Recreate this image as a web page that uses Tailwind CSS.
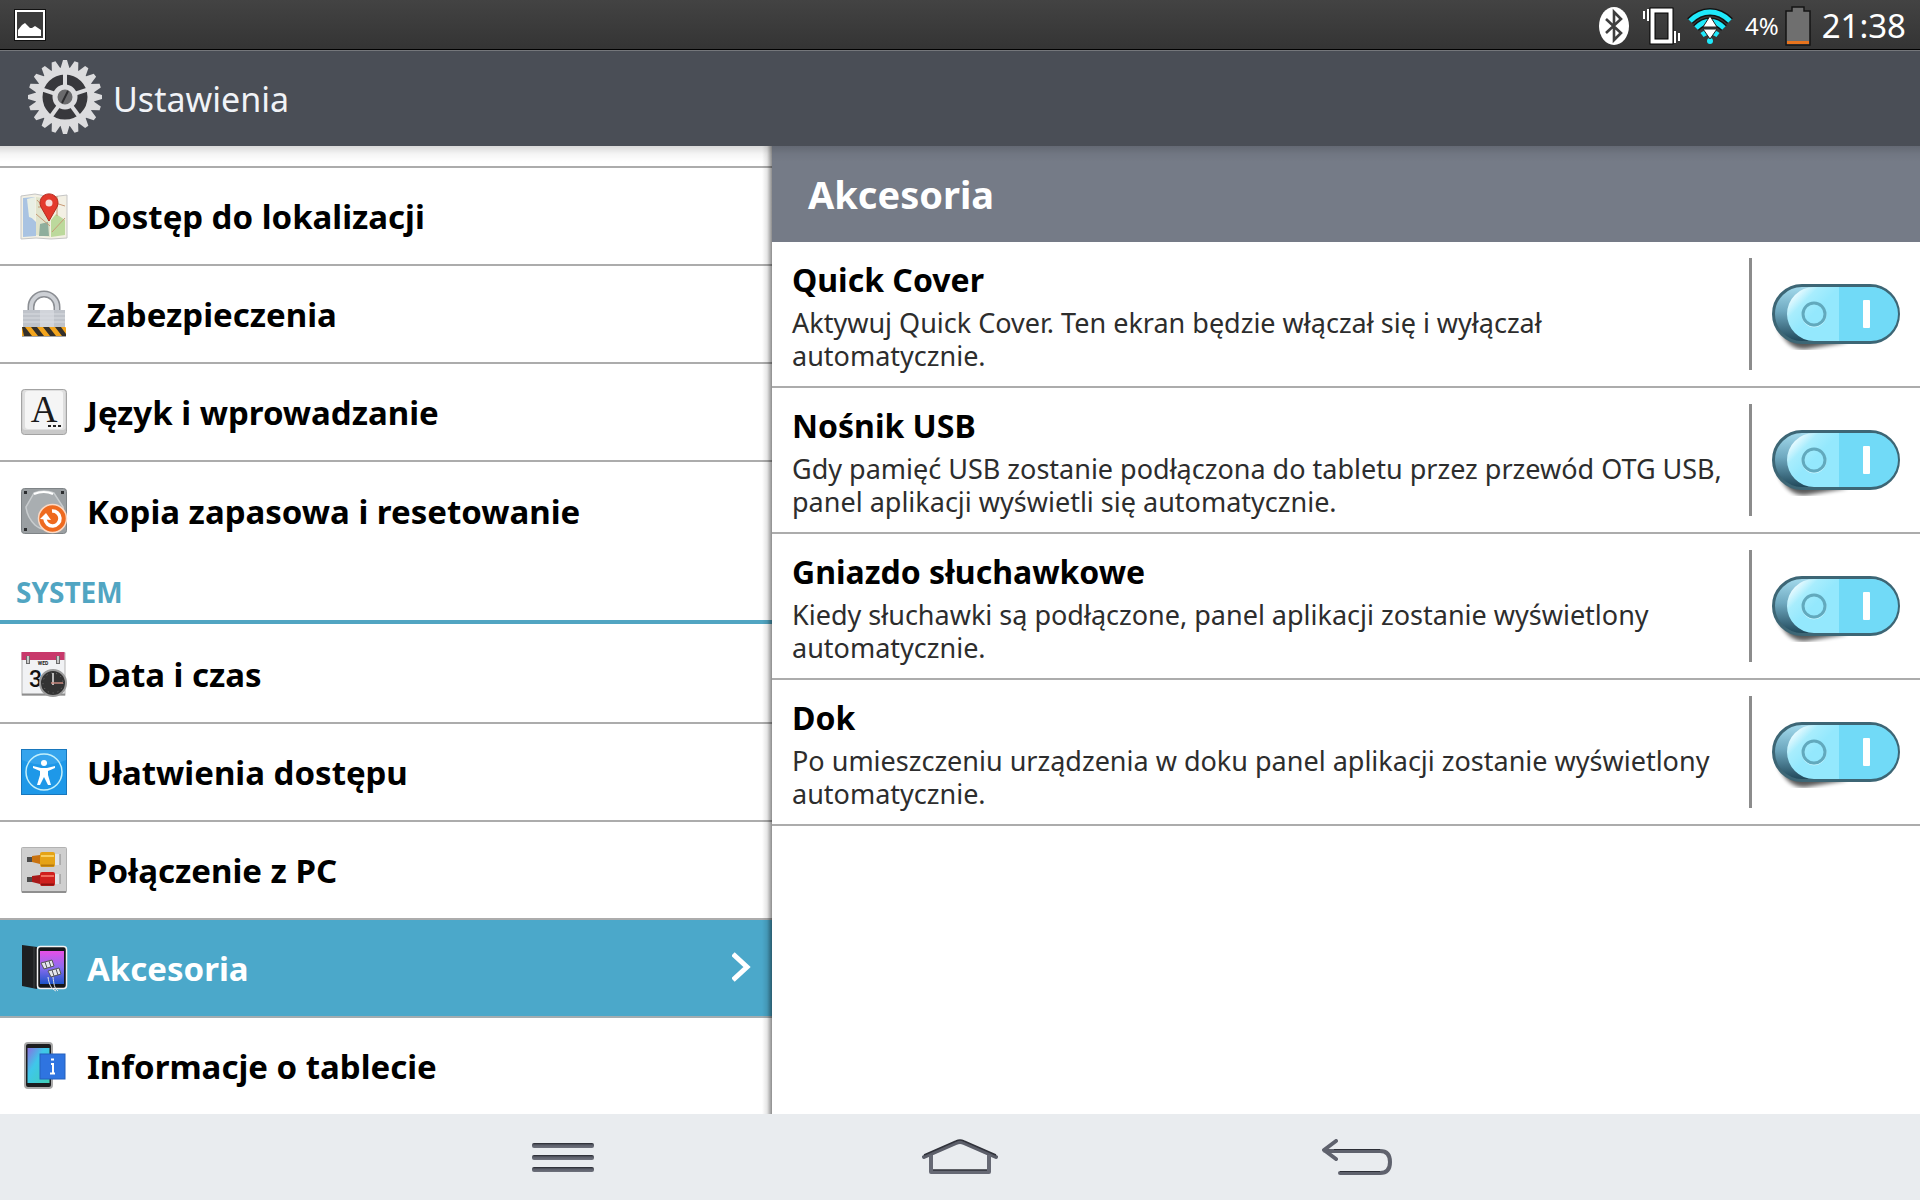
<!DOCTYPE html>
<html lang="pl">
<head>
<meta charset="utf-8">
<meta name="viewport" content="width=device-width, initial-scale=1">
<title>Ustawienia</title>
<script src="https://cdn.jsdelivr.net/npm/@tailwindcss/browser@4"></script>
</head>
<body class="flex min-h-screen flex-col bg-white font-['Noto_Sans',sans-serif] text-black">

<!-- Shared gradients and the switch artwork -->
<svg class="absolute size-0" aria-hidden="true">
  <defs>
    <linearGradient id="well" x1="0" y1="0" x2="0" y2="1"><stop offset="0" stop-color="#a5dcee"/><stop offset=".45" stop-color="#6fa9c0"/><stop offset="1" stop-color="#1d4456"/></linearGradient>
    <linearGradient id="rocker" x1="0" y1="0" x2=".5" y2=".5"><stop offset="0" stop-color="#fff"/><stop offset=".25" stop-color="#f0fcff"/><stop offset=".6" stop-color="#a8edfd"/><stop offset="1" stop-color="#94e8fd"/></linearGradient>
    <linearGradient id="ink" x1="0" y1="0" x2="0" y2="1"><stop offset="0" stop-color="#23252c"/><stop offset=".4" stop-color="#5b5e69"/><stop offset="1" stop-color="#6f727d"/></linearGradient>
    <filter id="soft" x="-20%" y="-50%" width="140%" height="200%"><feGaussianBlur stdDeviation="2"/></filter>
    <symbol id="switch" viewBox="0 0 128 72">
      <path d="M6 50C12 60 18 72 34 71C48 69 62 66 76 64Z" fill="#000" opacity=".65" filter="url(#soft)"/>
      <rect x="1.500" y="7.500" width="125" height="57" rx="28.500" fill="url(#well)" stroke="#3d6675" stroke-width="3"/>
      <path d="M68 9H42a27 27 0 0 0 0 54H68Z" fill="url(#rocker)"/>
      <path d="M67 9H99a27 27 0 0 1 0 54H67Z" fill="#71daf7"/>
      <circle cx="42" cy="37" r="12" fill="none" stroke="#d6f8ff" opacity=".8"/>
      <circle cx="42" cy="36" r="11" fill="none" stroke="#62a9bd" stroke-width="3"/>
      <rect x="91" y="22" width="7" height="28" rx="1" fill="#fff"/>
    </symbol>
  </defs>
</svg>

<!-- Status bar -->
<div class="flex h-[51px] items-center border-b border-[#75777b] bg-linear-to-b from-[#434343] to-[#343434] pr-[14px] pl-[14px] text-white shadow-[inset_0_-1px_0_#000]">
  <svg class="h-8 w-8" viewBox="0 0 32 32" role="img" aria-label="Obraz"><rect x=".5" y=".5" width="31" height="31" fill="#3c3c3c" stroke="#111"/><rect x="2" y="2" width="28" height="28" fill="none" stroke="#fff" stroke-width="2"/><path d="M4 27V21L8 16L11 14L16 19H18L21 17L27 21V27Z" fill="#fff"/></svg>
  <div class="ml-auto flex items-center pt-px">
    <svg class="h-[38px] w-[30px]" viewBox="0 0 30 38" role="img" aria-label="Bluetooth"><ellipse cx="15" cy="19" rx="15" ry="19" fill="#fff"/><path d="M7 12L22 26L15 33V5L22 12L7 26" fill="none" stroke="#3e3e3e" stroke-width="2.600"/></svg>
    <svg class="ml-[13px] h-[38px] w-[38px]" viewBox="0 0 38 38" role="img" aria-label="Wibracje"><rect x="10.500" y="3.500" width="18" height="31" fill="none" stroke="#000" stroke-width="6"/><rect x="10.500" y="3.500" width="18" height="31" fill="none" stroke="#fff" stroke-width="4"/><path d="M2 4V12M6 2V14M33 24V36M37 26V34" stroke="#fff" stroke-width="2"/></svg>
    <svg class="ml-[7px] h-[38px] w-[46px]" viewBox="0 0 46 38" role="img" aria-label="Wi-Fi"><g fill="none" stroke="#111" stroke-width="8"><path d="M3 14C15 2 31 2 43 14M9 21C18 12 28 12 37 21"/></g><g fill="none" stroke="#1fe9fb" stroke-width="5"><path d="M3 14C15 2 31 2 43 14M9 21C18 12 28 12 37 21M15 28C20 24 26 24 31 28"/></g><circle cx="23" cy="34" r="3" fill="#1fe9fb"/><path d="M23 9L30 20H16ZM23 32L16 22H30Z" fill="#fff" stroke="#222"/></svg>
    <span class="ml-3 text-2xl">4%</span>
    <svg class="ml-[6px] h-10 w-[26px]" viewBox="0 0 26 40" role="img" aria-label="Bateria"><path d="M1 5H7V1H19V5H25V39H1Z" fill="#6f6f6f" stroke="#151515" stroke-width="1.500"/><rect x="2" y="35" width="22" height="3" fill="#e8741e"/></svg>
    <time class="ml-[11px] text-[33px] leading-10">21:38</time>
  </div>
</div>

<!-- Application bar -->
<header class="flex h-[95px] items-center bg-[#4a4e56] pl-[25px] text-[#f1f3f7]">
  <svg class="-mt-1 h-20 w-20" viewBox="-40 -40 80 80" aria-hidden="true">
    <circle r="25" fill="#38383c"/>
    <g fill="#dcdcde">
      <path d="M-5 -27L-2 -37H2L5 -27ZM-5 27L-2 37H2L5 27Z"/>
      <path transform="rotate(18)" d="M-5 -27L-2 -37H2L5 -27ZM-5 27L-2 37H2L5 27Z"/>
      <path transform="rotate(36)" d="M-5 -27L-2 -37H2L5 -27ZM-5 27L-2 37H2L5 27Z"/>
      <path transform="rotate(54)" d="M-5 -27L-2 -37H2L5 -27ZM-5 27L-2 37H2L5 27Z"/>
      <path transform="rotate(72)" d="M-5 -27L-2 -37H2L5 -27ZM-5 27L-2 37H2L5 27Z"/>
      <path transform="rotate(90)" d="M-5 -27L-2 -37H2L5 -27ZM-5 27L-2 37H2L5 27Z"/>
      <path transform="rotate(108)" d="M-5 -27L-2 -37H2L5 -27ZM-5 27L-2 37H2L5 27Z"/>
      <path transform="rotate(126)" d="M-5 -27L-2 -37H2L5 -27ZM-5 27L-2 37H2L5 27Z"/>
      <path transform="rotate(144)" d="M-5 -27L-2 -37H2L5 -27ZM-5 27L-2 37H2L5 27Z"/>
      <path transform="rotate(162)" d="M-5 -27L-2 -37H2L5 -27ZM-5 27L-2 37H2L5 27Z"/>
    </g>
    <circle r="26" fill="none" stroke="#dcdcde" stroke-width="7"/>
    <g stroke="#dcdcde" stroke-width="4"><path d="M0 -10V-26"/><path d="M0 -10V-26" transform="rotate(72)"/><path d="M0 -10V-26" transform="rotate(144)"/><path d="M0 -10V-26" transform="rotate(216)"/><path d="M0 -10V-26" transform="rotate(288)"/></g>
    <circle r="10" fill="#6a6a6c" stroke="#dcdcde" stroke-width="5"/>
    <path d="M-3 6L3 -6" stroke="#2d2d2f" stroke-width="2"/>
  </svg>
  <h1 class="ml-2 text-[34px] leading-none font-normal">Ustawienia</h1>
</header>

<main class="relative grid flex-1 grid-cols-[193fr_287fr]">
  <!-- Category list -->
  <nav class="relative text-[33px] leading-10 font-bold" aria-label="Kategorie">
    <div class="h-[22px] border-b-2 border-[#acacac]"></div>

    <a href="#lokalizacja" class="flex h-[98px] items-center gap-[19px] border-b-2 border-[#acacac] px-5">
      <svg class="size-12" viewBox="0 0 48 48" aria-hidden="true">
        <path d="M1 4L15 2L31 5L47 3V46L31 47L16 46L1 47Z" fill="#f3f0e4" stroke="#c5c5c5"/>
        <path d="M3 6L15 5V20L10 24L16 30V44L3 45Z" fill="#a9c3e2"/><path d="M7 7L15 5V27L9 25Z" fill="#e9efe4"/>
        <path d="M16 5L30 7V45L16 43Z" fill="#e0e3cb"/><path d="M31 28L36 22L45 28V43L31 45Z" fill="#bcd99c"/>
        <path d="M20 32L28 30L29 44H19Z" fill="#8fae9c"/>
        <path d="M17 8L28 20M16 22L30 34M32 40L45 26M32 10L45 14M37 4V24M18 15H29" stroke="#c79a77" fill="none"/>
        <path d="M29 29L21 15A9 9 0 1 1 37 15Z" fill="#e33a2d" stroke="#b5281c"/><circle cx="29" cy="11" r="3.500" fill="#f7dcd8"/>
      </svg>
      <span class="pt-px">Dostęp do lokalizacji</span>
    </a>

    <a href="#zabezpieczenia" class="flex h-[98px] items-center gap-[19px] border-b-2 border-[#acacac] px-5">
      <svg class="size-12" viewBox="0 0 48 48" aria-hidden="true">
        <path d="M11 24V17A13 13 0 0 1 37 17V24" fill="none" stroke="#8b8e93" stroke-width="7"/><path d="M11 24V17A13 13 0 0 1 37 17V24" fill="none" stroke="#cdd0d5" stroke-width="4"/>
        <rect x="3" y="20" width="42" height="18" fill="#bfc3ca"/><path d="M3 24H45M3 28H45M3 32H45" stroke="#d8dbe0"/><rect x="20" y="20" width="14" height="18" fill="#d8dbe1" opacity=".7"/>
        <rect x="2" y="37" width="44" height="10" rx="1" fill="#f3a51d"/><path d="M2 37H5L12 46H4ZM11 37H17L24 46H18ZM23 37H29L36 46H30ZM35 37H41L46 44V46H42Z" fill="#34302a"/><path d="M2 46.500H46" stroke="#a5a5a5"/>
      </svg>
      <span class="pt-px">Zabezpieczenia</span>
    </a>

    <a href="#jezyk" class="flex h-[98px] items-center gap-[19px] border-b-2 border-[#acacac] px-5">
      <svg class="size-12" viewBox="0 0 48 48" aria-hidden="true">
        <rect x="1.500" y="1.500" width="45" height="45" rx="3" fill="#c9c9c9" stroke="#a3a3a3"/><rect x="2.500" y="2" width="43" height="40" rx="3" fill="#dedede"/><rect x="5" y="3" width="38" height="38" rx="3" fill="#f5f5f5"/>
        <text x="24" y="34" text-anchor="middle" font-family="Liberation Serif, serif" font-weight="400" font-size="37" fill="#1b1b1b">A</text>
        <path d="M28 38H31M33 38H36M38 38H41" stroke="#222" stroke-width="2"/>
      </svg>
      <span class="pt-px">Język i wprowadzanie</span>
    </a>

    <a href="#kopia" class="flex h-[98px] items-center gap-[19px] px-5">
      <svg class="size-12" viewBox="0 0 48 48" aria-hidden="true">
        <rect x="1.500" y="1.500" width="45" height="45" rx="3" fill="#9a9fa2" stroke="#7f8487"/>
        <path d="M14 6Q24 2 34 6L43 20Q44 30 34 38Q24 46 15 38Q7 30 6 20Z" fill="#a9aeb1" stroke="#c9cdcf" stroke-width="1.500"/><path d="M14 7Q24 3 33 7" stroke="#fff" stroke-width="2" fill="none"/>
        <g fill="#2c2e30"><rect x="4" y="4" width="3" height="3"/><rect x="41" y="4" width="3" height="3"/><rect x="4" y="41" width="3" height="3"/></g>
        <circle cx="32.500" cy="31.500" r="14" fill="#ee6a1f" stroke="#fbd9c4" stroke-width="1.500"/>
        <path d="M32 24A7.500 7.500 0 1 1 25 32" fill="none" stroke="#fff" stroke-width="3.500"/><path d="M20 32L26 26L31 33Z" fill="#fff"/>
      </svg>
      <span class="pt-px">Kopia zapasowa i resetowanie</span>
    </a>

    <h2 class="mb-[2px] flex h-16 items-center border-b-4 border-[#51a5c2] pt-1 pl-4 text-[28px] leading-8 text-[#51a5c2]">SYSTEM</h2>

    <a href="#data" class="flex h-[98px] items-center gap-[19px] border-b-2 border-[#acacac] px-5">
      <svg class="size-12" viewBox="0 0 48 48" aria-hidden="true">
        <rect x="2" y="3" width="43" height="42" fill="#f1f2f4" stroke="#b5b5b5"/><path d="M2 44.500H45" stroke="#8e8e8e" stroke-width="2"/><rect x="1.500" y="2" width="43" height="8" fill="#c8396b"/>
        <path d="M8 6V14M38 6V14" stroke="#6b6b6b" stroke-width="4"/><path d="M8 6V13M38 6V13" stroke="#c9c9c9" stroke-width="2"/>
        <text x="23" y="15" text-anchor="middle" font-family="Roboto, sans-serif" font-weight="700" font-size="5" fill="#222">WED</text>
        <text x="9" y="37" font-family="Roboto, sans-serif" font-weight="500" font-size="23" fill="#111">3</text>
        <circle cx="33" cy="33" r="13" fill="#333" stroke="#9b9b9b" stroke-width="2"/><circle cx="33" cy="33" r="10" fill="none" stroke="#777" stroke-dasharray="1 4"/>
        <path d="M33 23V35" stroke="#e8e8e8" stroke-width="1.500"/><path d="M31 33H43" stroke="#c98a80" stroke-width="1.500"/>
      </svg>
      <span class="pt-px">Data i czas</span>
    </a>

    <a href="#ulatwienia" class="flex h-[98px] items-center gap-[19px] border-b-2 border-[#acacac] px-5">
      <svg class="size-12" viewBox="0 0 48 48" aria-hidden="true">
        <rect x="1.500" y="1.500" width="45" height="45" fill="#1e98e8" stroke="#1877bd"/><path d="M2 2H46V12Q24 22 2 12Z" fill="#4bb0f2" opacity=".5"/>
        <circle cx="24" cy="24" r="18" fill="none" stroke="#c3f0fb" stroke-width="1.500"/>
        <circle cx="24" cy="15" r="3" fill="#fff"/><path d="M13 18L21 20H27L35 18V20L28 23V27L31 37H28L24 29L20 37H17L20 27V23L13 20Z" fill="#fff"/>
      </svg>
      <span class="pt-px">Ułatwienia dostępu</span>
    </a>

    <a href="#pc" class="flex h-[98px] items-center gap-[19px] border-b-2 border-[#acacac] px-5">
      <svg class="size-12" viewBox="0 0 48 48" aria-hidden="true">
        <rect x="1.500" y="1.500" width="45" height="45" rx="1" fill="#cfcfcf" stroke="#b2b2b2"/><path d="M2 46H46" stroke="#8f8f8f" stroke-width="2"/>
        <rect x="7" y="11" width="6" height="5" fill="#4b4b4b"/><path d="M12 10L20 9V18L12 16Z" fill="#c9720f"/><rect x="20" y="6" width="15" height="15" rx="2" fill="#e5a316"/><path d="M21 10H34" stroke="#f8d060" stroke-width="2"/><path d="M21 19.500H34" stroke="#b97a0c" stroke-width="2"/><rect x="35" y="8" width="5" height="11" fill="#e2e5e8"/><path d="M40 8V19" stroke="#888"/>
        <rect x="7" y="31" width="6" height="5" fill="#4b4b4b"/><path d="M12 30L20 29V38L12 36Z" fill="#a81818"/><rect x="20" y="26" width="15" height="14" rx="2" fill="#cf201e"/><path d="M21 30H34" stroke="#ef6a5c" stroke-width="2"/><path d="M21 38.500H34" stroke="#8e1210" stroke-width="2"/><rect x="35" y="28" width="5" height="10" fill="#e2e5e8"/><path d="M40 28V38" stroke="#888"/>
      </svg>
      <span class="pt-px">Połączenie z PC</span>
    </a>

    <a href="#akcesoria" aria-current="page" class="flex h-[98px] items-center gap-[19px] border-b-2 border-[#a3adb1] bg-[#4ba8ca] px-5 text-white">
      <svg class="size-12" viewBox="0 0 48 48" aria-hidden="true">
        <defs><linearGradient id="screen" x1="0" y1="0" x2="0" y2="1"><stop offset="0" stop-color="#e84fe6"/><stop offset=".5" stop-color="#8a6cf0"/><stop offset="1" stop-color="#1e54c8"/></linearGradient></defs>
        <path d="M2 1L17 3V45L2 42Z" fill="#1d1f21"/><path d="M14 3V44" stroke="#3d4043"/>
        <rect x="17.500" y="2.500" width="29" height="42" rx="3" fill="#15161a" stroke="#f2f2f2" stroke-width="1.500"/><rect x="20" y="7" width="24" height="33" fill="url(#screen)"/>
        <path d="M21 19L32 16L34 22L24 25ZM28 27L39 24L41 30L31 33Z" fill="#e5e5ec" stroke="#555"/><path d="M25 18L27 24M29 17L31 23M32 26L34 32M36 25L38 31" stroke="#55555f"/>
        <path d="M28 33C29 40 31 45 36 47M33 33C34 40 34 44 38 47" stroke="#dfe3ea" fill="none"/>
      </svg>
      <span class="pt-px">Akcesoria</span>
      <svg class="ml-auto h-8 w-5" viewBox="0 0 20 32" aria-hidden="true"><path d="M1 2L15 15L1 28" fill="none" stroke="#fff" stroke-width="5"/></svg>
    </a>

    <a href="#informacje" class="flex h-24 items-center gap-[19px] px-5">
      <svg class="size-12" viewBox="0 0 48 48" aria-hidden="true">
        <defs><linearGradient id="info" x1="0" y1="0" x2="1" y2="1"><stop offset="0" stop-color="#8a6fe0"/><stop offset=".4" stop-color="#3fc7ea"/><stop offset="1" stop-color="#3fd0b5"/></linearGradient></defs>
        <rect x="5" y="1" width="27" height="45" rx="3" fill="#1c1d1f" stroke="#a9a9a9" stroke-width="2"/><rect x="7.500" y="6" width="22" height="35" fill="url(#info)"/>
        <rect x="20" y="12" width="25" height="25" fill="#2f74e0" stroke="#2560bd"/>
        <path d="M31 17.500H34M31 22H33V31M30 31.500H35" fill="none" stroke="#fff" stroke-width="2"/>
      </svg>
      <span class="pt-px">Informacje o tablecie</span>
    </a>

    <!-- Shade cast by the detail pane on the list -->
    <div class="pointer-events-none absolute inset-y-0 right-0 w-[10px] bg-linear-to-r from-black/0 via-black/10 to-black/45"></div>
  </nav>

  <!-- Detail pane -->
  <section aria-labelledby="pane-title" class="bg-white">
    <h2 id="pane-title" class="flex h-24 items-center bg-[#757b87] pl-9 text-[38px] leading-none font-bold text-white">Akcesoria</h2>

    <div class="flex h-[146px] items-center border-b-2 border-[#acacac] px-5">
      <div class="flex-1 pt-[2px] pr-4">
        <label for="cover" class="block text-[32px] leading-11 font-bold">Quick Cover</label>
        <p id="cover-info" class="mt-1 text-[27px] leading-[33px] text-[#2d2d2d]">Aktywuj Quick Cover. Ten ekran będzie włączał się i wyłączał automatycznie.</p>
      </div>
      <div class="mr-5 h-28 w-[3px] bg-[#8c8c8c]"></div>
      <div class="relative h-[72px] w-32">
        <svg class="size-full" aria-hidden="true"><use href="#switch"/></svg>
        <input id="cover" type="checkbox" role="switch" checked aria-describedby="cover-info" class="absolute inset-0 size-full cursor-pointer appearance-none rounded-full">
      </div>
    </div>

    <div class="flex h-[146px] items-center border-b-2 border-[#acacac] px-5">
      <div class="flex-1 pt-[2px] pr-4">
        <label for="usb" class="block text-[32px] leading-11 font-bold">Nośnik USB</label>
        <p id="usb-info" class="mt-1 text-[27px] leading-[33px] text-[#2d2d2d]">Gdy pamięć USB zostanie podłączona do tabletu przez przewód OTG USB, panel aplikacji wyświetli się automatycznie.</p>
      </div>
      <div class="mr-5 h-28 w-[3px] bg-[#8c8c8c]"></div>
      <div class="relative h-[72px] w-32">
        <svg class="size-full" aria-hidden="true"><use href="#switch"/></svg>
        <input id="usb" type="checkbox" role="switch" checked aria-describedby="usb-info" class="absolute inset-0 size-full cursor-pointer appearance-none rounded-full">
      </div>
    </div>

    <div class="flex h-[146px] items-center border-b-2 border-[#acacac] px-5">
      <div class="flex-1 pt-[2px] pr-4">
        <label for="headset" class="block text-[32px] leading-11 font-bold">Gniazdo słuchawkowe</label>
        <p id="headset-info" class="mt-1 text-[27px] leading-[33px] text-[#2d2d2d]">Kiedy słuchawki są podłączone, panel aplikacji zostanie wyświetlony automatycznie.</p>
      </div>
      <div class="mr-5 h-28 w-[3px] bg-[#8c8c8c]"></div>
      <div class="relative h-[72px] w-32">
        <svg class="size-full" aria-hidden="true"><use href="#switch"/></svg>
        <input id="headset" type="checkbox" role="switch" checked aria-describedby="headset-info" class="absolute inset-0 size-full cursor-pointer appearance-none rounded-full">
      </div>
    </div>

    <div class="flex h-[146px] items-center border-b-2 border-[#acacac] px-5">
      <div class="flex-1 pt-[2px] pr-4">
        <label for="dock" class="block text-[32px] leading-11 font-bold">Dok</label>
        <p id="dock-info" class="mt-1 text-[27px] leading-[33px] text-[#2d2d2d]">Po umieszczeniu urządzenia w doku panel aplikacji zostanie wyświetlony automatycznie.</p>
      </div>
      <div class="mr-5 h-28 w-[3px] bg-[#8c8c8c]"></div>
      <div class="relative h-[72px] w-32">
        <svg class="size-full" aria-hidden="true"><use href="#switch"/></svg>
        <input id="dock" type="checkbox" role="switch" checked aria-describedby="dock-info" class="absolute inset-0 size-full cursor-pointer appearance-none rounded-full">
      </div>
    </div>
  </section>

  <!-- Shade cast by the application bar -->
  <div class="pointer-events-none absolute inset-x-0 top-0 h-4 bg-linear-to-b from-black/15 via-black/4 to-black/0"></div>
</main>

<!-- System navigation keys -->
<footer class="flex h-[86px] justify-center bg-[#e9ecef]">
  <div class="grid w-[62%] grid-cols-3">
    <button type="button" aria-label="Menu" class="flex items-center justify-center">
      <svg class="h-9 w-[62px]" viewBox="0 0 62 36" aria-hidden="true"><g fill="url(#ink)"><rect y="4" width="62" height="5" rx="2"/><rect y="16" width="62" height="5" rx="2"/><rect y="28" width="62" height="5" rx="2"/></g></svg>
    </button>
    <button type="button" aria-label="Ekran główny" class="flex items-center justify-center">
      <svg class="h-9 w-[76px]" viewBox="0 0 76 36" aria-hidden="true"><path d="M2 18L34 4Q38 2 42 4L74 18" fill="none" stroke="#5b5e69" stroke-width="4" stroke-linecap="round"/><path d="M9 16V33H67V16" fill="none" stroke="#666974" stroke-width="4" stroke-linejoin="round"/><path d="M2 16L34 2Q38 0 42 2L74 16M11 31H65" fill="none" stroke="#30323a" stroke-width="1.500"/></svg>
    </button>
    <button type="button" aria-label="Wstecz" class="flex items-center justify-center">
      <svg class="h-9 w-[70px]" viewBox="0 0 70 36" aria-hidden="true"><path d="M14 2L2 11L14 20M3 12H58Q68 12 68 23T58 34H18" fill="none" stroke="#5f626d" stroke-width="4" stroke-linecap="round" stroke-linejoin="round"/><path d="M12 10.500H58M18 32.500H58" stroke="#2c2e36"/></svg>
    </button>
  </div>
</footer>
</body>
</html>
